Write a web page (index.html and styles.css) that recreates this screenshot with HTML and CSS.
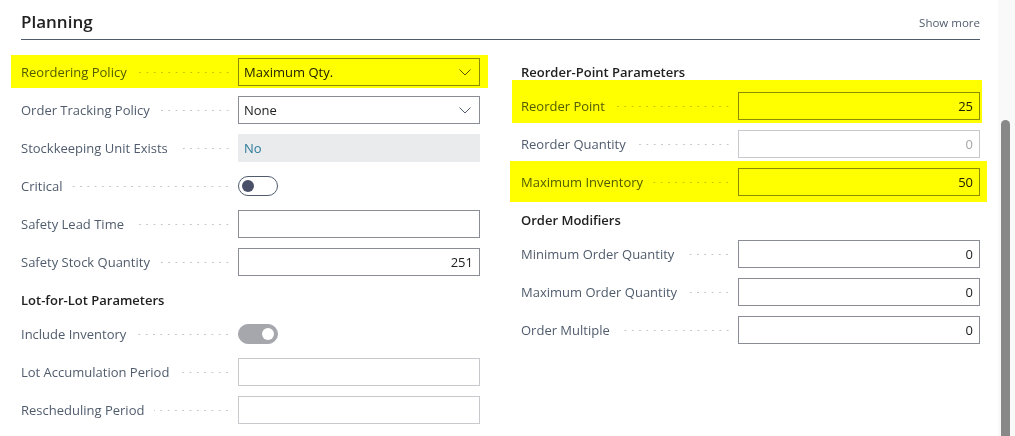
FILE: index.html
```html
<!DOCTYPE html>
<html lang="en">
<head>
<meta charset="UTF-8">
<meta name="viewport" content="width=device-width, initial-scale=1.0">
<title>Planning</title>
<link rel="stylesheet" href="styles.css">
</head>
<body>
<div class="page">
  <main class="card">
    <header class="card-head">
      <h2 class="card-title">Planning</h2>
      <a class="show-more">Show more</a>
    </header>

    <div class="columns">
      <!-- left column -->
      <div class="col">
        <div class="field">
          <div class="caption"><span class="label">Reordering Policy</span><span class="leader"></span></div>
          <div class="control select">Maximum Qty.
            <svg class="chevron" width="12" height="7" viewBox="0 0 12 7"><polyline points="0.5,0.5 6,6 11.5,0.5" /></svg>
          </div>
          <span class="mark mark-policy"></span>
        </div>
        <div class="field">
          <div class="caption"><span class="label">Order Tracking Policy</span><span class="leader"></span></div>
          <div class="control select">None
            <svg class="chevron" width="12" height="7" viewBox="0 0 12 7"><polyline points="0.5,0.5 6,6 11.5,0.5" /></svg>
          </div>
        </div>
        <div class="field">
          <div class="caption"><span class="label">Stockkeeping Unit Exists</span><span class="leader"></span></div>
          <div class="control readonly">No</div>
        </div>
        <div class="field">
          <div class="caption"><span class="label">Critical</span><span class="leader"></span></div>
          <span class="toggle"><span class="knob"></span></span>
        </div>
        <div class="field">
          <div class="caption"><span class="label">Safety Lead Time</span><span class="leader"></span></div>
          <div class="control"></div>
        </div>
        <div class="field">
          <div class="caption"><span class="label">Safety Stock Quantity</span><span class="leader"></span></div>
          <div class="control num">251</div>
        </div>

        <h3 class="group">Lot-for-Lot Parameters</h3>
        <div class="field">
          <div class="caption"><span class="label">Include Inventory</span><span class="leader"></span></div>
          <span class="toggle on"><span class="knob"></span></span>
        </div>
        <div class="field">
          <div class="caption"><span class="label">Lot Accumulation Period</span><span class="leader"></span></div>
          <div class="control disabled"></div>
        </div>
        <div class="field">
          <div class="caption"><span class="label">Rescheduling Period</span><span class="leader"></span></div>
          <div class="control disabled"></div>
        </div>
      </div>

      <!-- right column -->
      <div class="col">
        <h3 class="group">Reorder-Point Parameters</h3>
        <div class="field">
          <div class="caption"><span class="label">Reorder Point</span><span class="leader"></span></div>
          <div class="control num">25</div>
          <span class="mark mark-point"></span>
        </div>
        <div class="field">
          <div class="caption"><span class="label">Reorder Quantity</span><span class="leader"></span></div>
          <div class="control num disabled">0</div>
        </div>
        <div class="field">
          <div class="caption"><span class="label">Maximum Inventory</span><span class="leader"></span></div>
          <div class="control num">50</div>
          <span class="mark mark-max"></span>
        </div>

        <h3 class="group">Order Modifiers</h3>
        <div class="field">
          <div class="caption"><span class="label">Minimum Order Quantity</span><span class="leader"></span></div>
          <div class="control num">0</div>
        </div>
        <div class="field">
          <div class="caption"><span class="label">Maximum Order Quantity</span><span class="leader"></span></div>
          <div class="control num">0</div>
        </div>
        <div class="field">
          <div class="caption"><span class="label">Order Multiple</span><span class="leader"></span></div>
          <div class="control num">0</div>
        </div>
      </div>
    </div>
  </main>

  <div class="scrollbar"><div class="thumb"></div></div>
</div>
</body>
</html>
```

FILE: styles.css
```css
body {
  margin: 0;
  font-family: "Open Sans", "Noto Sans", Arial, sans-serif;
  font-size: 13px;
  color: #212121;
  background-color: #fff;
}

.page {
  display: flex;
  height: 436px;
  overflow: hidden;
}

/* Card */
.card {
  flex: 1;
  padding: 0 18px 0 21px;
}

.card-head {
  display: flex;
  align-items: center;
  justify-content: space-between;
  height: 36px;
  padding-top: 3px;
  border-bottom: 1px solid #505c6d;
}

.card-title {
  margin: 0;
  font-size: 17px;
  font-weight: 600;
  color: #212121;
}

.show-more {
  font-size: 11.5px;
  color: #505c6d;
  padding-top: 2px;
  cursor: pointer;
}

/* Columns */
.columns {
  display: grid;
  grid-template-columns: 459px 459px;
  column-gap: 41px;
  margin-top: 18px;
}

.group {
  margin: 0 0 10px;
  padding-top: 4px;
  height: 20px;
  line-height: 20px;
  font-size: 13px;
  font-weight: 600;
  color: #212121;
}

/* Fields */
.field {
  position: relative;
  display: flex;
  align-items: center;
  height: 28px;
  margin-bottom: 10px;
}

.caption {
  display: flex;
  align-items: center;
  width: 217px;
  flex: none;
}

.label {
  color: #505c6d;
  white-space: nowrap;
}

.leader {
  flex: 1;
  height: 3px;
  margin: 1px 7px 0 10px;
  background-image: radial-gradient(circle, #c3c6cc 0.8px, transparent 1.1px);
  background-size: 7.3px 3px;
  background-position: right center;
  background-repeat: repeat-x;
}

.control {
  box-sizing: border-box;
  display: flex;
  align-items: center;
  width: 242px;
  height: 28px;
  padding: 0 6px 0 5px;
  border: 1px solid #8a8d96;
  background-color: #fff;
  color: #212121;
}

.control.num {
  justify-content: flex-end;
}

.control.select {
  justify-content: space-between;
  padding-right: 8px;
}

.chevron polyline {
  fill: none;
  stroke: #505c6d;
  stroke-width: 1;
}

.control.readonly {
  border-color: #eaebed;
  background-color: #eaebed;
  color: #2b7a9b;
}

.control.disabled {
  border-color: #c8c9cc;
  color: #a6a6a6;
}

/* Toggle */
.toggle {
  box-sizing: border-box;
  position: relative;
  display: inline-block;
  width: 40px;
  height: 20px;
  border: 1px solid #505c6d;
  border-radius: 10px;
  background-color: #fff;
}

.toggle .knob {
  position: absolute;
  top: 3px;
  left: 3px;
  width: 12px;
  height: 12px;
  border-radius: 50%;
  background-color: #4a5068;
}

.toggle.on {
  border-color: #a5a7ad;
  background-color: #a5a7ad;
}

.toggle.on .knob {
  left: auto;
  right: 3px;
  background-color: #fff;
}

/* Highlighter marks */
.mark {
  position: absolute;
  background-color: #ffff00;
  mix-blend-mode: multiply;
  pointer-events: none;
}

.mark-policy {
  top: -3px;
  bottom: -2px;
  left: -10px;
  right: -8px;
}

.mark-point {
  top: -12px;
  bottom: -3px;
  left: -9px;
  right: -2px;
}

.mark-max {
  top: -7px;
  bottom: -6px;
  left: -11px;
  right: -7px;
}

/* Scrollbar */
.scrollbar {
  width: 17px;
  flex: none;
  background-color: #f9f9f9;
}

.thumb {
  width: 9px;
  height: 320px;
  margin: 120px 0 0 3px;
  border-radius: 5px 5px 0 0;
  background-color: #888;
}
```
